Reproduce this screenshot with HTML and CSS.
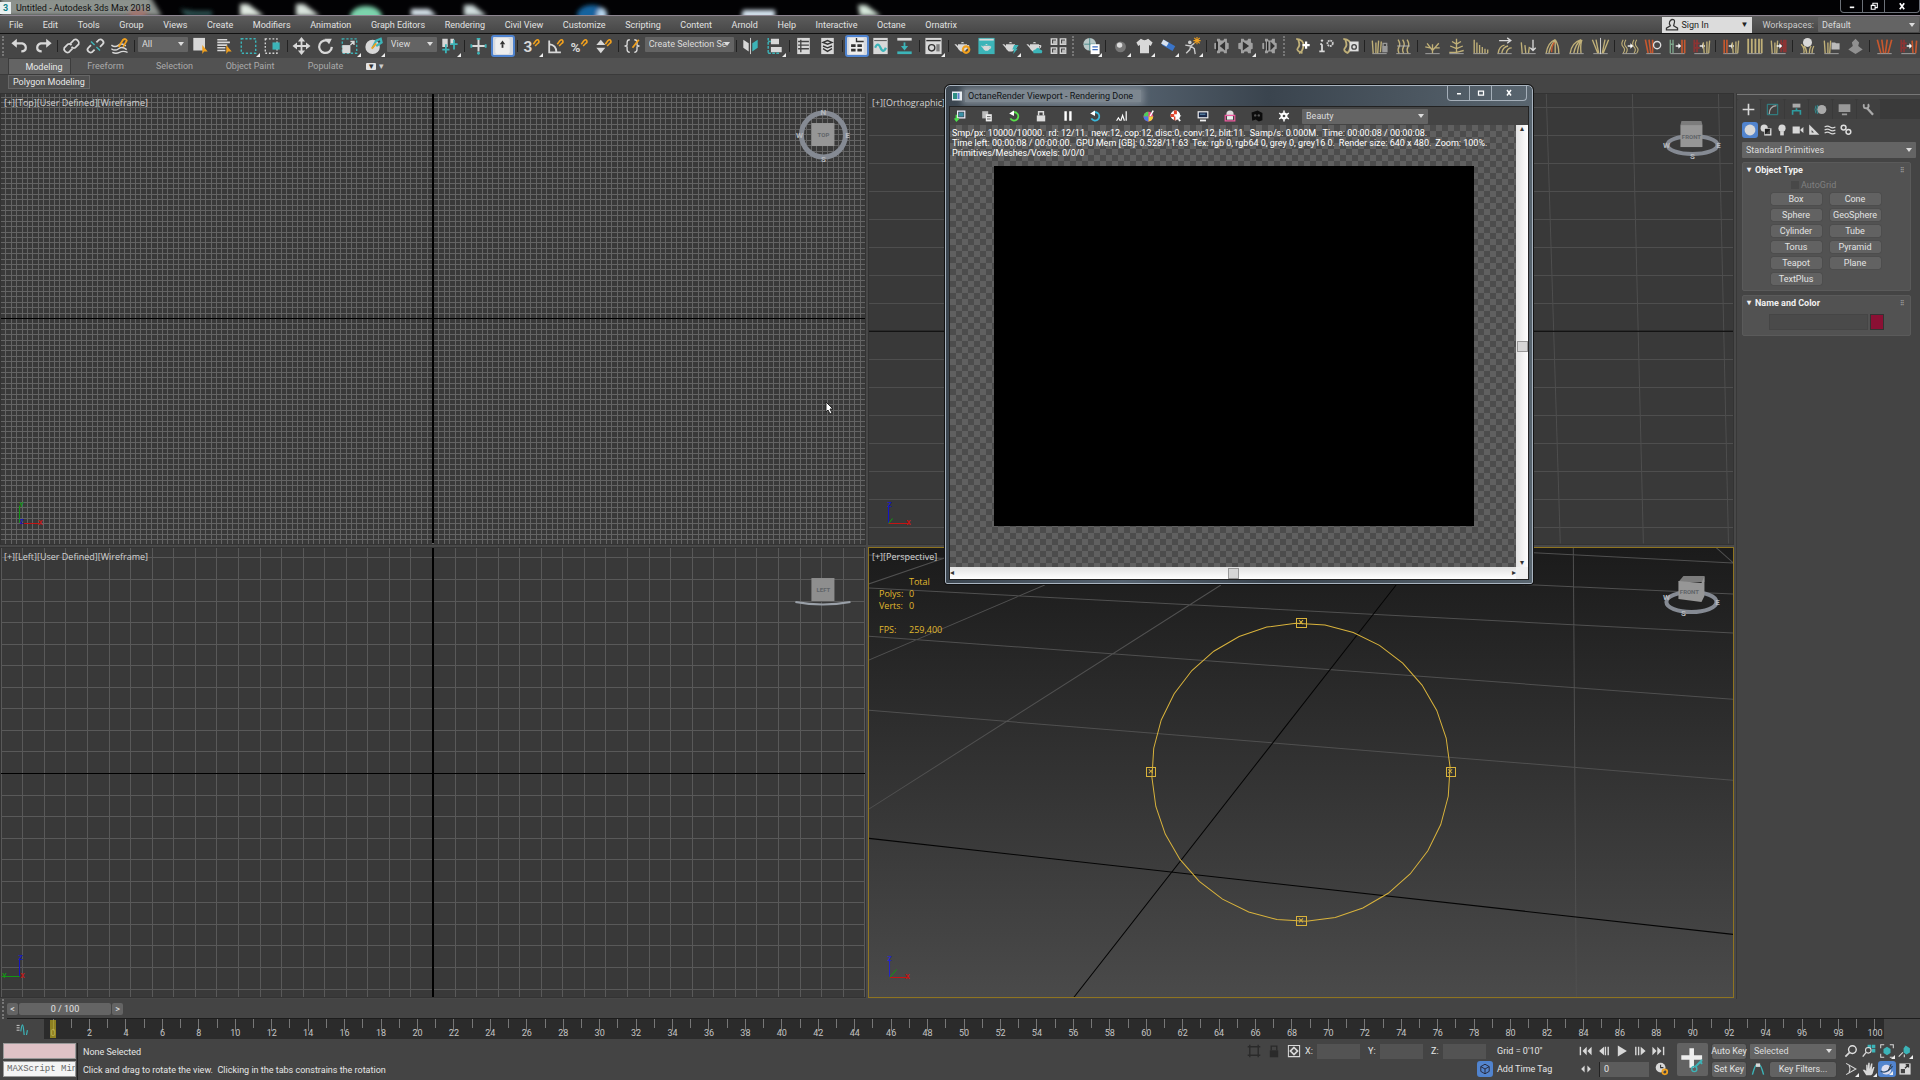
FILE: index.html
```
<!DOCTYPE html>
<html lang="en">
<head>
    <meta charset="UTF-8">
    <meta name="viewport" content="width=device-width, initial-scale=1.0">
    <title>Untitled - Autodesk 3ds Max 2018</title>
    <link rel="stylesheet" href="styles.css">
</head>
<body>

<header class="titlebar">
    <svg class="desktop" width="960" height="16" viewBox="0 0 960 16">
        <g filter="url(#soft)">
            <path d="M0 -4h150l12 20h-162z" fill="#8c928d"/>
            <ellipse cx="138" cy="14" rx="10" ry="5" fill="#a0766f"/>
            <path d="M180 9l14 2h18v5h-26z" fill="#2f5554"/>
            <path d="M240 4h8l16 12h-24z" fill="#dfe8e0"/>
            <path d="M296 4h8l16 12h-24z" fill="#d8e2dc"/>
            <ellipse cx="366" cy="17" rx="16" ry="11" fill="#7bd3ac"/>
            <path d="M411 9h18l8 7h-26z" fill="#dde9f2"/>
            <path d="M464 5h9l14 11h-23z" fill="#cfdcdc"/>
            <ellipse cx="592" cy="15" rx="15" ry="10" fill="#17639f"/>
            <ellipse cx="602" cy="15" rx="5" ry="7" fill="#b9d7ee"/>
            <path d="M743 10h32v8h-34z" fill="#d9e8f4"/>
            <path d="M858 5h8l15 11h-21z" fill="#d5e6da"/>
        </g>
        <defs><filter id="soft" x="-10%" y="-100%" width="120%" height="300%"><feGaussianBlur stdDeviation="2"/></filter></defs>
    </svg>
    <span class="app-icon">3</span>
    <span class="app-title">Untitled - Autodesk 3ds Max 2018</span>
    <div class="win-buttons">
        <button data-icon="winMin"></button><button data-icon="winRestore"></button><button class="close" data-icon="winClose"></button>
    </div>
</header>

<nav class="menubar">
    <div class="menus">
        <a href="#">File</a><a href="#">Edit</a><a href="#">Tools</a><a href="#">Group</a><a href="#">Views</a><a href="#">Create</a><a href="#">Modifiers</a><a href="#">Animation</a><a href="#">Graph Editors</a><a href="#">Rendering</a><a href="#">Civil View</a><a href="#">Customize</a><a href="#">Scripting</a><a href="#">Content</a><a href="#">Arnold</a><a href="#">Help</a><a href="#">Interactive</a><a href="#">Octane</a><a href="#">Ornatrix</a>
    </div>
    <button class="sign-in"><i data-icon="user"></i>Sign In<b>▼</b></button>
    <label for="workspace">Workspaces:</label>
    <select id="workspace" class="combo workspace"><option>Default</option></select>
</nav>

<div class="toolbar">
    <span class="grip"></span>
    <button data-icon="undo"></button>
    <button data-icon="redo"></button>
    <hr>
    <button data-icon="link"></button>
    <button data-icon="unlink"></button>
    <button data-icon="bind"></button>
    <hr>
    <select class="combo w50" aria-label="Selection filter"><option>All</option></select>
    <button data-icon="select"></button>
    <button data-icon="selectName"></button>
    <button data-icon="region" class="fly"></button>
    <button data-icon="windowSel"></button>
    <hr>
    <button data-icon="move"></button>
    <button data-icon="rotate"></button>
    <button data-icon="scale" class="fly"></button>
    <button data-icon="place" class="fly"></button>
    <select class="combo w50" aria-label="Reference coordinates"><option>View</option></select>
    <button data-icon="pivot" class="fly"></button>
    <hr>
    <button data-icon="manipulate"></button>
    <button data-icon="keyboard" class="on"></button>
    <hr>
    <button data-icon="snap3" class="fly"></button>
    <button data-icon="snapAngle"></button>
    <button data-icon="snapPercent"></button>
    <button data-icon="snapSpin"></button>
    <hr>
    <button data-icon="namedSets"></button>
    <select class="combo w89" aria-label="Named selections"><option>Create Selection Se</option></select>
    <hr>
    <button data-icon="mirror"></button>
    <button data-icon="align" class="fly"></button>
    <hr>
    <button data-icon="sceneList"></button>
    <button data-icon="layers"></button>
    <hr>
    <button data-icon="ribbon" class="on"></button>
    <button data-icon="curve"></button>
    <button data-icon="schematic"></button>
    <hr>
    <button data-icon="material" class="fly"></button>
    <hr>
    <button data-icon="teapotGear"></button>
    <button data-icon="teapotFrame"></button>
    <button data-icon="teapotBolt" class="fly"></button>
    <button data-icon="teapotCloud"></button>
    <button data-icon="gallery"></button>
    <span class="grip"></span>
    <button data-icon="globe" class="fly"></button>
    <hr>
    <button data-icon="ball" class="fly"></button>
    <button data-icon="shirt" class="fly"></button>
    <button data-icon="tube" class="fly"></button>
    <button data-icon="ragdoll" class="fly"></button>
    <hr>
    <button data-icon="gearPrev"></button>
    <button data-icon="gearPlay" class="fly"></button>
    <button data-icon="gearStep"></button>
    <span class="grip"></span>
    <button data-icon="hairAdd"></button>
    <button data-icon="hairInfo"></button>
    <button data-icon="hairPreset"></button>
    <hr>
    <button data-icon="hairLock"></button>
    <button data-icon="hairUp"></button>
    <hr>
    <button data-icon="hairBranch"></button>
    <button data-icon="hairTree"></button>
    <button data-icon="hairLength"></button>
    <button data-icon="hairWind"></button>
    <button data-icon="hairDown"></button>
    <button data-icon="hairFan"></button>
    <button data-icon="hairCurl"></button>
    <button data-icon="hairSplit"></button>
    <hr>
    <button data-icon="hairConvert"></button>
    <button data-icon="hairRing"></button>
    <button data-icon="hairToMesh"></button>
    <button data-icon="meshToHair"></button>
    <hr>
    <button data-icon="redToHair"></button>
    <button data-icon="hairBlock"></button>
    <button data-icon="hairToRed"></button>
    <hr>
    <button data-icon="hairBall"></button>
    <button data-icon="hairFolder"></button>
    <button data-icon="hairGray"></button>
    <hr>
    <button data-icon="redFan"></button>
    <button data-icon="redConvert"></button>
</div>

<div class="ribbon">
    <div class="ribbon-tabs">
        <button class="active">Modeling</button><button>Freeform</button><button>Selection</button><button>Object Paint</button><button>Populate</button>
        <button class="ribbon-min" aria-label="Minimize"><i>▾</i>▾</button>
    </div>
    <div class="ribbon-panel"><button>Polygon Modeling</button></div>
</div>

<main class="workspace-area">
    <div class="viewports">
        <section class="viewport">
            <svg viewBox="0 0 864 449" preserveAspectRatio="xMidYMid slice">
                <g id="grid-top" stroke="#646464"></g>
                <path d="M432 0v449M0 224h864" stroke="#000" shape-rendering="crispEdges"/>
                <g class="axis"><path d="M19 429v-18" stroke="#139613"/><path d="M19 429h20" stroke="#c41414"/><text x="21" y="413" fill="#139613">Y</text><text x="40" y="431" fill="#c41414">X</text><text x="21" y="430" fill="#1414c8">Z</text></g>
                <g class="cube">
                    <circle cx="822" cy="41" r="22" fill="none" stroke="#858a93" stroke-width="5"/>
                    <path d="M810 29h23v23h-23z" fill="#969696"/><text x="822" y="43" fill="#777">TOP</text>
                    <text x="822" y="21">N</text><text x="822" y="68">S</text><text x="798" y="44">W</text><text x="846" y="44">E</text>
                </g>
            </svg>
            <div class="vp-label"><span>[+]</span><span>[Top]</span><span>[User Defined]</span><span>[Wireframe]</span></div>
            <svg class="cursor" width="10" height="14" viewBox="0 0 10 14"><path d="M1 1v10l2-2 2 4 2-1-2-4h3z" fill="#fff" stroke="#222"/></svg>
        </section>
        <section class="viewport">
            <svg viewBox="0 0 864 449" preserveAspectRatio="xMidYMid slice">
                <g id="grid-ortho" stroke="#4e4e4e" shape-rendering="crispEdges"></g>
                <path d="M677 0l14 449M763 0l11 449M849 0l10 449" stroke="#4e4e4e"/>
                <path d="M0 237h864" stroke="#000"/>
                <g class="axis"><path d="M20 429v-18" stroke="#1414c8"/><path d="M20 429h22" stroke="#c41414"/><path d="M20 429l4-5" stroke="#139613"/><text x="21" y="413" fill="#1414c8">Z</text><text x="40" y="431" fill="#c41414">X</text></g>
                <g class="cube">
                    <ellipse cx="823" cy="51" rx="25" ry="9" fill="none" stroke="#858a93" stroke-width="4"/>
                    <path d="M811 31l1-4h20l1 4z" fill="#7c7c7c"/><path d="M811 31h22v22h-22z" fill="#969696"/><text x="822" y="45" fill="#666">FRONT</text>
                    <text x="797" y="54">W</text><text x="849" y="54">E</text><text x="823" y="65">S</text>
                </g>
            </svg>
            <div class="vp-label"><span>[+]</span><span>[Orthographic]</span></div>
        </section>
        <section class="viewport">
            <svg viewBox="0 1 864 449" preserveAspectRatio="xMidYMid slice">
                <g id="grid-left" stroke="#595959"></g>
                <path d="M432 0v450M0 226h864" stroke="#000" shape-rendering="crispEdges"/>
                <g class="axis"><path d="M19 429v-18" stroke="#1414c8"/><path d="M19 429h-18" stroke="#139613"/><text x="20" y="413" fill="#1414c8">Z</text><text x="4" y="431" fill="#139613">Y</text><text x="22" y="431" fill="#c41414">X</text></g>
                <g class="cube">
                    <path d="M810 31h23v23h-23z" fill="#8e8e8e"/><text x="822" y="45" fill="#555">LEFT</text>
                    <path d="M794 55q27 5 55 0" fill="none" stroke="#9aa0a8" stroke-width="2"/>
                </g>
            </svg>
            <div class="vp-label"><span>[+]</span><span>[Left]</span><span>[User Defined]</span><span>[Wireframe]</span></div>
        </section>
        <section class="viewport active">
            <svg viewBox="0 1 864 449" preserveAspectRatio="xMidYMid slice">
                <path d="M531 -1L864 16M0 8L864 47M0 41L864 86M0 89L864 152M0 163L864 233M0 37L76 11M0 113L176 38M0 262L352 38M704 0L707 450M846 0L864 16" stroke="#505050" fill="none"/>
                <path d="M0 291L864 387M205 450L527 38" stroke="#050505" fill="none"/>
                <polygon id="orbit" fill="none" stroke="#d9b33c"/>
                <g fill="none" stroke="#d9b33c" shape-rendering="crispEdges">
                    <path d="M428 71h9v9h-9zM278 220h9v9h-9zM428 369h9v9h-9zM577 220h9v9h-9z"/>
                </g>
                <path d="M430 73l4 4m0-4l-4 4M280 222l4 4m0-4l-4 4M430 371l4 4m0-4l-4 4M579 222l4 4m0-4l-4 4" stroke="#d9b33c"/>
                <g class="axis"><path d="M21 430v-18" stroke="#2424d0"/><path d="M21 430h20" stroke="#c41414"/><path d="M21 430l7-8" stroke="#139613"/><text x="21" y="414" fill="#2424d0">Z</text><text x="39" y="432" fill="#c41414">X</text></g>
                <g class="cube">
                    <ellipse cx="822" cy="55" rx="25" ry="10" fill="none" stroke="#858a93" stroke-width="4"/>
                    <path d="M809 35l5-6h21v6z" fill="#7c7c7c"/><path d="M809 34l23 2 3-7v20l-3 6-23-3z" fill="#969696"/><text x="820" y="47" fill="#666">FRONT</text>
                    <text x="797" y="53">W</text><text x="848" y="58">E</text><text x="814" y="69">S</text>
                </g>
            </svg>
            <div class="vp-label"><span>[+]</span><span>[Perspective]</span></div>
            <dl class="stats">
                <dt></dt><dd>Total</dd>
                <dt>Polys:</dt><dd>0</dd>
                <dt>Verts:</dt><dd>0</dd>
                <dt></dt><dd>&nbsp;</dd>
                <dt>FPS:</dt><dd>259,400</dd>
            </dl>
        </section>
    </div>

    <aside class="panel">
        <div class="panel-tabs">
            <button class="active" data-icon="tabCreate"></button><button data-icon="tabModify"></button><button data-icon="tabHierarchy"></button><button data-icon="tabMotion"></button><button data-icon="tabDisplay"></button><button data-icon="tabUtil"></button>
        </div>
        <div class="panel-cats">
            <button class="on" data-icon="catGeo"></button><button data-icon="catShape"></button><button data-icon="catLight"></button><button data-icon="catCamera"></button><button data-icon="catHelper"></button><button data-icon="catWarp"></button><button data-icon="catSystem"></button>
        </div>
        <select class="combo primitives" aria-label="Category"><option>Standard Primitives</option></select>
        <section class="rollout">
            <h2>Object Type</h2>
            <label class="autogrid"><input type="checkbox" disabled>AutoGrid</label>
            <div class="objects">
                <button>Box</button><button>Cone</button>
                <button>Sphere</button><button>GeoSphere</button>
                <button>Cylinder</button><button>Tube</button>
                <button>Torus</button><button>Pyramid</button>
                <button>Teapot</button><button>Plane</button>
                <button>TextPlus</button>
            </div>
        </section>
        <section class="rollout">
            <h2>Name and Color</h2>
            <div class="name-row"><input type="text" aria-label="Name"><button class="swatch" aria-label="Color"></button></div>
        </section>
    </aside>
</main>

<div class="time-slider">
    <span class="grip"></span>
    <button>&lt;</button><button class="frame">0 / 100</button><button>&gt;</button>
</div>
<div class="trackbar">
    <button class="mini-curve" data-icon="miniCurve"></button>
    <div class="track" id="track"></div>
</div>

<footer class="status">
    <div class="script">
        <input type="text" class="pink" aria-label="Macro recorder">
        <input type="text" value="MAXScript Mini Listener" aria-label="MAXScript listener">
    </div>
    <div class="prompt"><p>None Selected</p><p>Click and drag to rotate the view.&nbsp; Clicking in the tabs constrains the rotation</p></div>
    <div class="coords">
        <div class="line">
            <button class="dim" data-icon="isolate"></button><button class="dim" data-icon="lock"></button><button data-icon="absolute"></button>
            <label for="cx">X:</label><input id="cx" type="text">
            <label for="cy">Y:</label><input id="cy" type="text">
            <label for="cz">Z:</label><input id="cz" type="text">
            <span class="grid-size">Grid = 0'10"</span>
        </div>
        <div class="line tag"><button class="on" data-icon="cubeTag"></button><span class="grid-size">Add Time Tag</span></div>
    </div>
    <div class="playback">
        <div class="line"><button data-icon="first"></button><button data-icon="prev"></button><button data-icon="play"></button><button data-icon="next"></button><button data-icon="last"></button></div>
        <div class="line"><button data-icon="keyMode"></button><input type="text" value="0" aria-label="Frame"><button data-icon="timeConfig"></button></div>
    </div>
    <button class="set-keys" data-icon="bigKey"></button>
    <div class="keys">
        <div class="line"><button class="push">Auto Key</button><select class="combo w86" aria-label="Key set"><option>Selected</option></select></div>
        <div class="line"><button class="push">Set Key</button><button data-icon="tangent"></button><button class="push filters">Key Filters...</button></div>
    </div>
    <div class="nav">
        <button data-icon="zoom"></button><button data-icon="zoomAll"></button><button class="fly" data-icon="extents"></button><button class="fly" data-icon="extentsAll"></button>
        <button class="fly" data-icon="fov"></button><button class="fly" data-icon="pan"></button><button class="fly on" data-icon="orbitNav"></button><button data-icon="maximize"></button>
    </div>
</footer>

<!-- floating render window -->
<div class="octane">
    <div class="octane-title">
        <i data-icon="octaneApp"></i><span>OctaneRender Viewport - Rendering Done</span>
        <div class="win-buttons">
            <button data-icon="winMin"></button><button data-icon="winMax"></button><button class="close" data-icon="winClose"></button>
        </div>
    </div>
    <div class="octane-body">
        <div class="octane-tools">
            <button data-icon="oSave"></button><button data-icon="oCopy"></button><button data-icon="oRestart"></button><button data-icon="oLock"></button><button data-icon="oPause"></button><button data-icon="oRefresh"></button><button data-icon="oFocus"></button><button data-icon="oPick"></button><button data-icon="oTarget"></button><button data-icon="oScreen"></button><button data-icon="oRegion"></button><button data-icon="oFilm"></button><button data-icon="oGear"></button>
            <select class="combo beauty" aria-label="Render pass"><option>Beauty</option></select>
        </div>
        <div class="octane-view">
            <div class="canvas">
                <p><span>Smp/px: 10000/10000.</span><span>rd: 12/11.</span><span>new:12, cop:12, disc:0, conv:12, blit:11.</span><span>Samp/s: 0.000M.</span><span>Time: 00:00:08 / 00:00:08.</span></p>
                <p><span>Time left: 00:00:08 / 00:00:00.</span><span>GPU Mem [GB]: 0.528/11.63</span><span>Tex: rgb 0, rgb64 0, grey 0, grey16 0.</span><span>Render size: 640 x 480.</span><span>Zoom: 100%.</span></p>
                <p><span>Primitives/Meshes/Voxels: 0/0/0</span></p>
                <div class="frame-buffer"></div>
            </div>
            <div class="vscroll"><i>▴</i><b></b><i>▾</i></div>
            <div class="hscroll"><i>◂</i><b></b><i>▸</i></div>
        </div>
    </div>
</div>

<script src="script.js"></script>
</body>
</html>
```
FILE: styles.css
```
* {
    box-sizing: border-box;
}
body {
    margin: 0;
    height: 100vh;
    display: flex;
    flex-direction: column;
    overflow: hidden;
    background: #444;
    color: #e2e2e2;
    font-family: Roboto, "Liberation Sans", sans-serif;
    font-size: 9px;
    line-height: 12px;
}
p, h2, dl, dd {
    margin: 0;
}
button, input, select {
    font: inherit;
    color: inherit;
    margin: 0;
    padding: 0;
    border: 0;
    background: none;
    min-width: 0;
}
button {
    white-space: nowrap;
}
svg {
    display: block;
}
a {
    color: inherit;
    text-decoration: none;
}

/* title bar */
.titlebar {
    position: relative;
    flex: none;
    height: 16px;
    display: flex;
    align-items: center;
    background: #020204;
    border-bottom: 1px solid #8d8590;
    overflow: hidden;
}
.desktop {
    position: absolute;
    left: 0;
    top: 0;
}
.app-icon {
    position: relative;
    width: 11px;
    margin-right: 5px;
    background: #e9f0f0;
    color: #0e7f86;
    font-weight: bold;
    text-align: center;
}
.app-title {
    position: relative;
    color: #111;
}
.win-buttons {
    display: flex;
    margin-left: auto;
    align-self: flex-start;
    border: 1px solid #6c7178;
    border-top: 0;
    border-radius: 0 0 4px 4px;
}
.win-buttons button {
    width: 22px;
    height: 12px;
    display: flex;
    align-items: center;
    justify-content: center;
    border-right: 1px solid #6c7178;
}
.win-buttons .close {
    width: 34px;
    border-right: 0;
}
.win-buttons svg {
    width: 14px;
    height: 11px;
}

/* menu */
.menubar {
    flex: none;
    height: 18px;
    display: flex;
    align-items: center;
    padding: 0 1px 0 9px;
    background: linear-gradient(#5c5c5c, #474747);
    border-bottom: 1px solid #111;
}
.menus {
    display: flex;
    justify-content: space-between;
    width: 948px;
}
.menubar label {
    margin: 0 4px 0 11px;
    color: #ccc;
}
.sign-in {
    display: flex;
    align-items: center;
    width: 90px;
    height: 16px;
    margin-left: auto;
    padding-right: 3px;
    background: #dcdcdc;
    color: #222;
}
.sign-in b {
    margin-left: auto;
    font-size: 8px;
}
.sign-in svg {
    width: 20px;
    height: 16px;
}
.combo {
    appearance: none;
    height: 15px;
    padding: 0 4px;
    border-radius: 1px;
    color: #dcdcdc;
    background: #646464 url("data:image/svg+xml,%3Csvg xmlns='http://www.w3.org/2000/svg' width='6' height='4'%3E%3Cpath d='M0 0h6L3 4z' fill='%23ddd'/%3E%3C/svg%3E") no-repeat right 4px center;
}
.workspace {
    width: 101px;
}
.w50 {
    width: 50px;
    margin: 0 1px;
}
.w89 {
    width: 89px;
}
.w86 {
    width: 86px;
}

/* main toolbar */
.toolbar {
    flex: none;
    height: 24px;
    display: flex;
    align-items: center;
    background: #464646;
}
.toolbar button {
    position: relative;
    flex: 0 0 24px;
    height: 22px;
    display: flex;
    align-items: center;
    justify-content: center;
}
.toolbar button svg {
    width: 19px;
    height: 18px;
}
.toolbar hr {
    width: 1px;
    height: 12px;
    margin: 0 2px;
    border: 0;
    background: #222;
}
.toolbar .combo {
    margin-top: -4px;
    flex: none;
}
.on {
    background: #d5d9e0;
    border: 2px solid #4f83cf;
    border-radius: 3px;
}
.fly::after {
    content: "";
    position: absolute;
    right: 1px;
    bottom: 0;
    border: 2px solid transparent;
    border-right-color: #eee;
    border-bottom-color: #eee;
}
.grip {
    flex: none;
    width: 3px;
    height: 20px;
    margin: 0 4px 0 2px;
    border-left: 2px dotted #777;
}
.toolbar .grip:first-child {
    margin-right: 2px;
}

/* ribbon */
.ribbon {
    flex: none;
    padding-left: 8px;
    background: #525252;
    height: 35px;
}
.ribbon-tabs {
    display: flex;
    height: 16px;
    color: #aaa;
}
.ribbon-tabs button {
    width: 69px;
    text-align: center;
}
.ribbon-tabs button:nth-child(1) {
    width: 63px;
    padding-left: 9px;
    color: #e8e8e8;
    background: #646464;
    border: 1px solid #3c3c3c;
    border-bottom: 0;
}
.ribbon-tabs button:nth-child(4) {
    width: 82px;
}
.ribbon-tabs .ribbon-min {
    width: 30px;
    color: #ccc;
}
.ribbon-min i {
    display: inline-block;
    width: 10px;
    height: 7px;
    margin-right: 3px;
    border-radius: 1px;
    background: #e4e4e4;
    color: #333;
    font-style: normal;
    line-height: 7px;
    text-align: center;
}
.ribbon-panel {
    height: 19px;
    margin-left: -8px;
    padding-left: 8px;
    background: #454545;
    border-top: 1px solid #3a3a3a;
}
.ribbon-panel button {
    display: block;
    height: 14px;
    padding: 0 4px;
    background: #505050;
    border: 1px solid #666;
    color: #e8e8e8;
}

/* viewports */
.workspace-area {
    flex: 1;
    min-height: 0;
    display: flex;
}
.viewports {
    flex: 1;
    min-width: 0;
    display: grid;
    grid-template: 1fr 1fr / 1fr 1fr;
    gap: 4px;
    padding: 1px 3px 2px 1px;
    background: #484848;
}
.viewport {
    position: relative;
    min-width: 0;
    min-height: 0;
    overflow: hidden;
    background: #393939;
    outline: 1px solid #333;
}
.viewport.active {
    background: linear-gradient(#1b1b1b, #4a4a4a);
    outline: 1px solid #8f7420;
}
.viewport > svg:first-child {
    width: 100%;
    height: 100%;
}
.vp-label {
    position: absolute;
    left: 3px;
    top: 3px;
    display: flex;
    font-family: "Open Sans", sans-serif;
    color: #d4d4d4;
}
.axis {
    fill: none;
    font-size: 7px;
    font-weight: bold;
    text-anchor: middle;
}
.cube text {
    font-size: 8px;
    font-weight: bold;
    text-anchor: middle;
    fill: #b5b8bd;
}
.cube text[fill] {
    font-size: 6px;
    fill: #606468;
}
.cursor {
    position: absolute;
    left: 824px;
    top: 307px;
}
.stats {
    position: absolute;
    left: 10px;
    top: 28px;
    display: grid;
    grid-template-columns: 30px 40px;
    color: #e0b92e;
    font-family: "Open Sans", sans-serif;
}

/* command panel */
.panel {
    width: 184px;
    padding: 6px 4px 0 5px;
    background: #444;
    border-left: 1px solid #383838;
}
.panel-tabs {
    display: flex;
    margin: 0 -4px 0 -5px;
    background: #3a3a3a;
    box-shadow: 0 -4px 0 #444, 0 -5px 0 #777;
}
.panel-tabs button {
    width: 23px;
    height: 20px;
    margin-right: 1px;
    background: #404040;
    border-radius: 2px 2px 0 0;
    display: flex;
    align-items: center;
    justify-content: center;
}
.panel-tabs .active {
    background: #444;
}
.panel-tabs svg, .panel-cats svg {
    width: 13px;
    height: 13px;
}
.panel-cats {
    display: flex;
    height: 17px;
    margin: 3px 0 3px;
}
.panel-cats button {
    width: 16px;
    height: 16px;
    display: flex;
    align-items: center;
    justify-content: center;
}
.panel-cats svg {
    width: 12px;
    height: 12px;
}
.panel-cats .on {
    background: #5585cc;
}
.primitives {
    display: block;
    width: 100%;
    height: 16px;
}
.rollout {
    margin: 4px 5px 3px 0;
    padding-bottom: 5px;
    background: #525252;
    border: 1px solid #5a5a5a;
    border-radius: 2px;
}
.rollout h2 {
    height: 14px;
    padding: 0 6px 0 4px;
    display: flex;
    gap: 4px;
    font-size: 9px;
    line-height: 14px;
    font-weight: bold;
    color: #f0f0f0;
}
.rollout h2::before {
    content: "▾";
    font-size: 8px;
}
.rollout h2::after {
    content: "⠿";
    margin-left: auto;
    font-size: 6px;
    color: #999;
}
.autogrid {
    display: flex;
    gap: 2px;
    align-items: center;
    padding-left: 48px;
    height: 15px;
    color: #808080;
}
.autogrid input {
    appearance: none;
    width: 8px;
    height: 8px;
    background: #484848;
}
.objects {
    display: grid;
    grid-template-columns: 51px 51px;
    gap: 4px 8px;
    justify-content: center;
    margin: 1px 2px 0 0;
}
.objects button, .push {
    height: 12px;
    line-height: 12px;
    background: #626262;
    border-radius: 2px;
    box-shadow: 0 0 1px #2c2c2c;
    color: #e2e2e2;
}
.name-row {
    display: flex;
    justify-content: center;
    gap: 2px;
    padding-top: 4px;
}
.name-row input {
    width: 99px;
    height: 16px;
    background: #4a4a4a;
    border: 1px solid #454545;
}
.swatch {
    width: 14px;
    height: 16px;
    background: #8b1034;
    border: 1px solid #333;
}

/* time controls */
.time-slider {
    flex: none;
    height: 19px;
    display: flex;
    align-items: center;
    gap: 1px;
    padding-top: 1px;
}
.time-slider .grip {
    margin-right: 1px;
}
.time-slider button {
    width: 11px;
    height: 12px;
    line-height: 12px;
    background: #646464;
    border-radius: 2px;
}
.time-slider .frame {
    width: 92px;
}
.trackbar {
    flex: none;
    height: 21px;
    display: flex;
    margin-left: 7px;
    border-top: 1px solid #1d1d1d;
}
.mini-curve {
    width: 37px;
    padding-right: 7px;
    display: flex;
    align-items: center;
    justify-content: center;
}
.mini-curve svg {
    width: 12px;
    height: 12px;
}
.track {
    flex: 1;
    margin-right: 36px;
    display: flex;
    background: #2b2b2b;
    color: #c4c4c4;
}
.track span {
    position: relative;
    flex: 1 1 0;
    min-width: 0;
    display: flex;
    justify-content: center;
    align-items: flex-end;
    white-space: nowrap;
    background: linear-gradient(#777, #777) center top / 1px 9px no-repeat;
}
.track span:nth-child(odd) {
    background-size: 1px 12px;
}
.track .now::before {
    content: "";
    position: absolute;
    left: 6px;
    top: 1px;
    width: 6px;
    height: 18px;
    background: #b8a51e;
    opacity: 0.7;
}

/* status bar */
.status {
    flex: none;
    height: 41px;
    display: flex;
    padding: 4px 6px 0 3px;
    color: #e6e6e6;
}
.status button {
    position: relative;
    display: flex;
    align-items: center;
    justify-content: center;
}
.status svg {
    width: 14px;
    height: 14px;
}
.script {
    width: 75px;
    padding-right: 1px;
    border-right: 1px solid #222;
}
.script input {
    display: block;
    width: 73px;
    height: 16px;
    margin-bottom: 2px;
    border: 1px solid #999;
    background: #f4f4f4;
    color: #666;
    font: 9px "Liberation Mono", monospace;
    padding-left: 3px;
}
.script .pink {
    background: #dfc2c6;
}
.prompt {
    flex: 1;
    padding-left: 5px;
}
.prompt p {
    line-height: 18px;
}
.line {
    display: flex;
    align-items: center;
    height: 16px;
    margin-bottom: 2px;
}
.coords {
    width: 332px;
}
.coords button {
    width: 18px;
    height: 16px;
    margin-right: 2px;
}
.dim {
    opacity: 0.5;
}
.coords label {
    width: 12px;
}
.coords label ~ label {
    margin-left: 8px;
}
.coords input {
    width: 43px;
    height: 15px;
    background: #535353;
}
.grid-size {
    margin-left: 11px;
}
.coords .tag {
    margin-left: 232px;
}
.coords .tag .on {
    width: 16px;
    background: #5585cc;
}
.tag .grid-size {
    margin-left: 2px;
}
.playback {
    width: 100px;
}
.playback button {
    width: 18px;
}
.playback input {
    width: 50px;
    height: 15px;
    margin: 0 4px;
    padding-left: 4px;
    background: #5c5c5c;
    border-left: 1px solid #222;
}
.set-keys {
    width: 31px;
    height: 33px;
    margin-right: 4px;
    background: #626262;
    border-radius: 2px;
}
.status .set-keys svg {
    width: 26px;
    height: 26px;
}
.keys .line {
    gap: 4px;
}
.keys button {
    width: 16px;
}
.keys .push {
    width: 34px;
    height: 15px;
}
.keys .filters {
    width: 66px;
}
.nav {
    display: grid;
    grid-template: 16px 16px / repeat(4, 18px);
    row-gap: 2px;
    margin-left: 6px;
}
.nav .on {
    background: #5585cc;
}

/* octane window */
.octane {
    position: absolute;
    left: 945px;
    top: 85px;
    width: 588px;
    height: 499px;
    display: flex;
    flex-direction: column;
    padding: 0 3px 3px;
    border: 1px solid #a9b4c0;
    outline: 1px solid #111;
    border-radius: 5px 5px 2px 2px;
    background: linear-gradient(90deg, #3c4650, #566370 30%, #3a444e 55%, #59656f);
}
.octane-title {
    flex: none;
    height: 20px;
    display: flex;
    align-items: center;
    gap: 5px;
    padding: 0 2px;
    color: #101316;
}
.octane-title > span {
    padding: 0 8px 0 3px;
    margin-left: -3px;
    background: #7d8790;
    box-shadow: 0 0 6px 3px #7d8790;
}
.octane-title i {
    position: relative;
}
.octane-title svg {
    width: 12px;
    height: 10px;
}
.octane-title .win-buttons {
    border-color: #a5afb9;
}
.octane-title .win-buttons button {
    height: 14px;
    border-color: #a5afb9;
}
.octane-body {
    flex: 1;
    min-height: 0;
    display: flex;
    flex-direction: column;
    border: 1px solid #222;
}
.octane-tools {
    flex: none;
    height: 18px;
    display: flex;
    align-items: center;
    background: #444;
    padding-left: 1px;
}
.octane-tools button {
    width: 27px;
    display: flex;
    justify-content: center;
    padding-right: 10px;
}
.octane-tools svg {
    width: 12px;
    height: 12px;
}
.beauty {
    width: 126px;
}
.octane-view {
    flex: 1;
    min-height: 0;
    display: grid;
    grid-template: 1fr 12px / 1fr 12px;
    background: #f0f0f0;
}
.canvas {
    padding: 3px 0 0 2px;
    color: #fff;
    background: repeating-conic-gradient(#606060 0 25%, #4c4c4c 0 50%) 0 0 / 12px 12px;
}
.canvas p {
    display: flex;
    gap: 4px;
    height: 10px;
    line-height: 10px;
    white-space: nowrap;
}
.frame-buffer {
    width: 480px;
    height: 360px;
    margin: 8px auto 0;
    background: #000;
}
.vscroll, .hscroll {
    display: flex;
    justify-content: space-between;
    align-items: center;
    color: #333;
    font-size: 8px;
    line-height: 8px;
    background: linear-gradient(90deg, #e2e2e2, #fff);
}
.vscroll {
    flex-direction: column;
}
.hscroll {
    background: linear-gradient(#e2e2e2, #fff);
}
.vscroll i, .hscroll i {
    font-style: normal;
}
.vscroll b, .hscroll b {
    width: 11px;
    height: 11px;
    background: #d6d6d6;
    border: 1px solid #999;
}
```
FILE: script.js
```
var W = '#d8d8d8', C = '#3cb4b8', O = '#f0a01e', H = '#c0b078', R = '#c8582e', D = '#8c3434';

function s(d, color, w) {
    return '<path d="' + d + '" fill="none" stroke="' + (color || W) + '" stroke-width="' + (w || 1.5) + '"/>';
}
function f(d, color) {
    return '<path d="' + d + '" fill="' + (color || W) + '"/>';
}
function dot(x, y, r, color) {
    return '<circle cx="' + x + '" cy="' + y + '" r="' + r + '" fill="' + (color || W) + '"/>';
}

var base = s('M2 18.5h16', '#aaa', 1);
var magnet = s('M12 8l3-4q2-2 3 0t-1 3l-3 3', O, 1.8);
var pot = 'M5 8h10q1 6-3 8H8Q5 14 4.5 12L1 8h2l2 2zM8 7q2-3 4 0zM15 9q4-1 2 3l-3 2v-1q4-3 1-3z';
var gear = f('M5 2h3l1 2h3l1-2h3v4l2 1v6l-2 1v4h-3l-1-2H9l-1 2H5v-4l-3-1V7l3-1z', '#a0a0a0');
var tuftL = s('M3 18L2 4M6 18V6M8 18L9 4', H);
var tuftR = s('M13 18l-1-12M16 18V5M18 18l1-14', H);
var arrow = s('M8 10h5', '#fff', 1.5) + f('M11 7l3 3-3 3z', '#fff');

var icons = {
    winMin: f('M6 10h8v3H6z', '#fff'),
    winMax: s('M5 6h10v8H5z', '#fff', 2.5),
    winRestore: s('M5 8h7v7H5zM8 7V4h8v8h-3', '#fff', 2),
    winClose: s('M6 4l8 11M14 4L6 15', '#fff', 3),
    user: s('M10 3q4 0 3 4t-1 4l5 3v2H3v-2l5-3Q6 8 7 6t3-3z', '#333', 1.5),
    undo: s('M4 7h9q4 1 4 5t-5 4', W, 2.5) + f('M1 7l6-5v10z'),
    redo: s('M16 7H7q-4 1-4 5t5 4', W, 2.5) + f('M19 7l-6-5v10z'),
    link: s('M9 7l4-4q2-1 4 1t1 4l-4 4q-2 1-4-1M11 13l-4 4q-2 1-4-1t-1-4l4-4q2-1 4 1', W, 2),
    unlink: s('M11 6l3-3q2-1 4 1t0 4l-3 3M9 14l-3 3q-2 1-4-1t0-4l3-3', W, 2) + s('M5 5l4 4M11 11l4 4', C),
    bind: s('M1 9q4 3 8 0t8 1M1 13q4 3 8 0t9 1M2 17q4 2 8 0t9 0') + s('M9 11l5-8q3-2 4 1l-4 7', O, 2),
    select: f('M2 1h13v14H2z') + f('M12 9v10l2-3 4 0z', O),
    selectName: s('M2 3h11M2 6h14M2 9h11M2 12h9M2 15h9', W, 1.8) + f('M12 9v10l2-3 4 0z', O),
    region: '<path d="M2 2h16v16H2z" fill="none" stroke="' + C + '" stroke-width="1.6" stroke-dasharray="2.5 2"/>',
    windowSel: '<path d="M2 2h13v16H2z" fill="none" stroke="' + W + '" stroke-width="1.5" stroke-dasharray="2 2"/>' + f('M10 6h8v8h-8z', C),
    move: s('M10 3v14M3 10h14', W, 2) + f('M10 0l4 5H6zM10 20l4-5H6zM0 10l5-4v8zM20 10l-5-4v8z'),
    rotate: s('M14 5a7 7 0 1 0 3 6', W, 2.5) + f('M9 2l8 0-3 6z'),
    scale: '<path d="M2 2h16v16H2z" fill="none" stroke="' + C + '" stroke-width="1.5" stroke-dasharray="2.5 2"/>' + f('M2 9h9v9H2z') + s('M11 9l4-4M11 5h4v4', W),
    place: dot(9, 11, 8) + s('M9 12l4-8 5-2 1 4-6 4', C, 2.5) + s('M8 13l5-6', O, 2),
    pivot: f('M2 2h6v9H2zM11 2h4v7h-4z') + s('M6 8v10M2 14h8M15 3v11M11 8h8', C, 2),
    manipulate: s('M10 2v14M3 10h14', W, 2.2) + dot(10, 18, 1.6, C) + s('M8 2h4M2 8v4M18 8v4', C, 2),
    keyboard: '<rect x="2" y="1" width="16" height="18" rx="3" fill="#eee"/>' + s('M10 12V8', '#333', 2) + f('M7 8l3-4 3 4z', '#333'),
    snap3: '<text x="1" y="17" font-size="17" font-weight="bold" fill="#d8d8d8">3</text>' + magnet,
    snapAngle: s('M3 4v13h13M3 8q8 1 8 9', W, 2) + magnet,
    snapPercent: '<text x="0" y="17" font-size="15" font-weight="bold" fill="#d8d8d8">%</text>' + magnet,
    snapSpin: f('M7 3l5 6H2zM7 18l5-6H2z') + magnet,
    namedSets: s('M7 3Q4 3 4 6v3l-2 1 2 1v3q0 3 3 3M12 3q3 0 3 3v3l2 1-2 1v3q0 3-3 3') + s('M10 12l7-9', O, 2),
    mirror: f('M2 3l6 4v9l-6-4z') + f('M18 3l-6 4v9l6-4z', C) + s('M10 1v18', W, 1),
    align: f('M6 2h9v6H6zM6 11h12v6H6z') + '<path d="M3 1v18M3 5h3M3 18h12" fill="none" stroke="' + C + '" stroke-width="1.6" stroke-dasharray="3 1.5"/>',
    sceneList: f('M3 1h14v18H3z') + s('M4 5h12M4 9h12M4 13h12M7 3v14', '#444', 1.5),
    layers: f('M3 1h14v18H3z') + s('M5 6l5-2 5 2-5 2zM5 10l5 2 5-2M5 13l5 3 5-3', '#333', 1.5),
    ribbon: f('M2 1h16v18H2z', '#eee') + f('M4 8h5v3H4zM11 8h5v3h-5zM4 13h5v3H4zM11 13h5v3h-5z', '#333') + s('M10 1v4h8', '#333', 1.5),
    curve: f('M2 1h16v18H2z') + s('M3 4h14', '#444', 1) + s('M4 12q3-7 6 0t6 0', C, 2.5),
    schematic: f('M2 1h16v3H2z') + s('M10 6v6', C, 2) + f('M6 10h8l-4 5z', C) + f('M2 16h16v3H2z', C),
    material: f('M1 1h18v18H1z') + s('M2 4h16', '#333', 1.5) + '<circle cx="8" cy="12" r="3.5" fill="none" stroke="#333" stroke-width="1.5"/>' + s('M14 8v8M16 8v8', '#333', 1),
    teapotGear: f(pot) + '<circle cx="14" cy="14" r="3.5" fill="none" stroke="' + O + '" stroke-width="2.5"/>',
    teapotFrame: f('M1 1h18v18H1z', C) + s('M2 3h16', W, 2) + '<g transform="translate(3 4) scale(.7)">' + f(pot) + '</g>',
    teapotBolt: f(pot) + f('M14 9l5 0-3 4h2l-5 6 1-5h-2z', C),
    teapotCloud: f(pot) + f('M9 18q-2-3 2-4 3-4 5 0 4 1 2 4z', C),
    gallery: s('M2 2h6v6H2zM12 2h6v6h-6zM2 12h6v6H2zM12 12h6v6h-6z') + f('M4 4h4v4H4zM14 4h4v4h-4zM4 14h4v4H4zM14 14h4v4h-4z', '#bbb'),
    globe: dot(8, 8, 7, '#b8c8c8') + s('M2 8h12M8 1v14', '#4a8a8a', 1) + f('M9 8h10v11H9z', '#fff') + s('M11 11h6M11 14h6', '#3a6cc0', 1.5),
    ball: dot(10, 11, 6, '#777') + dot(9, 9, 3, '#ddd'),
    shirt: f('M6 2q4 3 8 0l5 4-2 4-2-1v9H5V9l-2 1-2-4z'),
    tube: s('M4 6l12 7', '#3a74c8', 6) + s('M3 5l6 3.500', '#d8e2ee', 5),
    ragdoll: s('M2 9l6 1 4-3M8 10l-1 4-4 4M8 10l4 3 1 6', '#ccc', 1.5) + dot(7, 6, 2, '#ccc') + s('M15 0v8M11 4h8M12 1l6 6M18 1l-6 6', O, 1.2),
    gearPrev: gear + s('M5 5v10', '#222', 2) + f('M14 5v10L8 10z', '#333'),
    gearPlay: gear + f('M7 5v10l7-5z', '#333'),
    gearStep: gear + s('M5 5v10M8 5v10', '#222', 1.5) + f('M11 5v10l5-5z', '#333'),
    hairAdd: s('M3 2q9 1 8 8t-5 8M5 3q3 6 0 9t5 6', H, 2) + s('M14 5v8M10 9h8', '#fff', 2.5),
    hairInfo: s('M5 8v8M2 16h6M3 8h2', W, 2) + dot(5, 4, 1.3) + '<circle cx="14" cy="7" r="3" fill="none" stroke="#ccc" stroke-width="2" stroke-dasharray="2 .8"/>',
    hairPreset: s('M2 2q9 1 8 8t-4 8M4 3q3 6 0 9t3 6', H, 2) + f('M9 5h10v11H9z', '#ddd') + '<circle cx="14" cy="11" r="2.5" fill="none" stroke="#444" stroke-width="1.500"/>',
    hairLock: base + tuftL + s('M11 17L12 5', H) + f('M13 10h6v7h-6z', '#999') + s('M14 10V7h4v3', '#999'),
    hairUp: base + s('M5 18q-2-4 0-7T4 3M10 18q-2-4 0-7T9 3M15 18q-2-4 0-7T14 3', H) + s('M3 10h14', '#bbb', 1),
    hairBranch: base + s('M10 18V8M10 15L4 7M10 15l7-8M7 12L2 11M13 12l5 0', H),
    hairTree: base + s('M10 18V2M10 8L5 5M10 8l5-3M10 13l-7-3M10 13l7-3M10 17l-8 0M10 17l8-2', H),
    hairLength: base + s('M3 18V3M6 18V6M9 18V9M12 18v-7M15 18v-5M18 18v-4', H),
    hairWind: base + s('M3 18Q4 10 10 9M7 18q1-7 7-8M12 18q1-6 6-6', H) + s('M4 4h12M13 1l4 3-4 3'),
    hairDown: base + s('M3 18L2 6M7 18L6 9M10 18l1-7', H) + s('M15 3v12M12 12l3 3 3-3'),
    hairFan: base + s('M3 18Q5 6 13 3M6 18Q8 8 13 4M13 18V4M17 18Q17 9 13 3', H) + s('M9 17q0-7 3-11', R),
    hairCurl: base + s('M3 18Q5 6 15 3M7 18Q9 8 14 4M11 18Q12 9 15 4M15 18Q14 9 16 3', H),
    hairSplit: base + s('M7 18L1 3M8 18L5 3M12 18l3-15M13 18l6-15', H) + s('M10 1v18', W, 1),
    hairConvert: base + s('M3 18q3-4 0-7t0-8M6 18q3-4 0-7t0-8M15 18q3-4 0-7t0-8M18 18q3-4 0-7t0-8', H, 1.2) + arrow,
    hairRing: base + s('M4 18L1 3M7 18L5 3M9 18V3', R, 1.8) + '<circle cx="14" cy="9" r="4" fill="none" stroke="#ddd" stroke-width="1.5"/>',
    hairToMesh: base + s('M2 3v15M5 3v15M2 8h4', '#7ea68c') + arrow + s('M15 3v15M18 3v15', R, 1.8),
    meshToHair: base + s('M2 3v14M5 3v14M1 7h7M1 12h7', D, 2) + arrow + tuftR,
    redToHair: base + s('M3 3v15M6 3v15', R, 1.8) + arrow + tuftR,
    hairBlock: base + s('M3 18V2M7 18V2M11 18V2M15 18V2M18 18V2', H, 2),
    hairToRed: base + tuftL + s('M13 3v14M16 3v14M18 3v14M12 7h7M12 12h7', D, 2) + arrow,
    hairBall: base + s('M6 18Q7 12 3 8M9 18q0-5-3-8M12 18q0-5 2-8M15 18q0-5 2-8', H) + dot(10, 6, 5),
    hairFolder: base + tuftL + f('M10 6h4l1 1h4v7h-9z', '#bbb'),
    hairGray: f('M10 2l4 4-1 4 5 4-8 5-8-5 5-4-1-4z', '#909090'),
    redFan: base + s('M6 18L2 3M9 18L7 3M11 18l2-15M14 18l4-15', R, 1.8),
    redConvert: base + s('M2 3v14M5 3v14M1 7h7M1 12h7', D, 2) + arrow + s('M15 18l-1-14M18 18l1-14', R, 1.8),

    tabCreate: s('M10 1v18M1 10h18', W, 2.5),
    tabModify: s('M2 2h16v16H2z', '#2e8c90', 1.5) + s('M5 17Q5 5 16 4', '#aaa', 2),
    tabHierarchy: f('M4 1h12v6H4z', '#aaa') + s('M10 8v4M4 18v-6h12v6', '#2e9ca0', 2.5),
    tabMotion: dot(12, 10, 7, '#aaa') + s('M3 4q-3 6 0 12M6 3q-4 7 0 14', '#2e8c90'),
    tabDisplay: f('M1 2h18v12H1zM6 16h8v3H6z', '#999'),
    tabUtil: s('M8 8l9 10', '#aaa', 3.5) + s('M3 2q-2 7 5 6 4-3 1-6', '#aaa', 3),
    catGeo: dot(10, 10, 9),
    catShape: dot(7, 7, 6) + s('M8 8h10v10H8z', '#eee', 2) + f('M8 8v10L18 8z', '#222'),
    catLight: dot(10, 7, 6) + f('M7 12h6v7H7z'),
    catCamera: f('M1 4h12v12H1zM14 9l5-4v10l-5-4z'),
    catHelper: f('M2 1l17 17H2z') + f('M6 10v4h4z', '#444'),
    catWarp: s('M1 5q5-3 9 0t9 0M1 10q5-3 9 0t9 0M1 15q5-3 9 0t9 0', W, 1.8),
    catSystem: '<circle cx="6" cy="6" r="4" fill="none" stroke="#ddd" stroke-width="2.5"/><circle cx="14" cy="13" r="4" fill="none" stroke="#ddd" stroke-width="2.5"/>',

    miniCurve: s('M1 4h5M1 8h5M1 12h5') + s('M8 14q3-22 5 0t6-2', C, 2),
    isolate: s('M4 1v18M16 1v18M1 4h18M1 16h18', '#111', 2),
    lock: f('M4 9h12v10H4z', '#111') + s('M6 9V3h8v6', '#111', 2),
    absolute: s('M2 2h16v16H2z') + s('M10 5l5 5-5 5-5-5z', W, 2.5),
    cubeTag: s('M10 2l7 4v8l-7 4-7-4V6zM3 6l7 4 7-4M10 10v8', '#223', 1.5),
    first: s('M2 4v12', W, 2) + f('M11 4v12l-6-6zM18 4v12l-6-6z'),
    prev: f('M10 4v12L3 10z') + s('M12 4v12M16 4v12', W, 2),
    play: f('M4 2v16l13-8z'),
    next: s('M4 4v12M8 4v12', W, 2) + f('M11 4v12l7-6z'),
    last: f('M2 4v12l6-6zM9 4v12l6-6z') + s('M18 4v12', W, 2),
    keyMode: f('M8 5v10l-5-5zM12 5v10l5-5z'),
    timeConfig: dot(8, 8, 7) + s('M8 4v4h4', '#333') + '<circle cx="14" cy="14" r="3.5" fill="none" stroke="' + O + '" stroke-width="2.5"/>',
    bigKey: s('M9 1v15M1 8h16', '#eee', 3.5) + '<circle cx="11" cy="17" r="2" fill="none" stroke="' + C + '"/>' + s('M12 15l5-5M15 11l2 2', C),
    tangent: s('M2 18Q6 4 8 4M18 18Q14 4 12 4', C, 2) + f('M7 2h6v5H7z'),
    zoom: '<circle cx="12" cy="8" r="5.500" fill="none" stroke="#e2e2e2" stroke-width="2"/>' + s('M8 12l-6 6', W, 2.5),
    zoomAll: f('M8 1h5v5H8zM14 1h5v5h-5zM14 7h5v5h-5z', C) + '<circle cx="9" cy="9" r="4" fill="none" stroke="#ddd" stroke-width="1.5"/>' + s('M6 12l-5 6', W, 2),
    extents: s('M1 6V1h5M14 1h5v5M1 14v5h5M14 19h5', W) + f('M10 4l5 3v6l-5 3-5-3V7z', C),
    extentsAll: f('M11 2l6 4v6l-5 3-4-3V6z', C) + s('M1 18l6-6M9 19v-4', W),
    fov: s('M3 2l14 8L3 18M7 5q3 5 0 10', W),
    pan: f('M6 19l-5-8 3 0 2 2V4h2v6l1-9h2v9l2-8h2l-1 9 2-4h2l-3 10-2 2z'),
    orbitNav: dot(9, 11, 7, '#dde') + s('M1 13q8 5 17-7', '#25486e', 2) + s('M12 12l4-9', '#333'),
    maximize: f('M2 2h16v16H2z') + f('M4 10h6v6H4z', '#444') + s('M10 9l5-5M11 4h4v4', '#333', 2),

    octaneApp: f('M0 1h20v18H0z', '#e8eef2') + f('M2 4h8v12H2z', '#2f8f83') + f('M11 4h4v12h-4z', '#5c83c8'),
    oSave: s('M6 2h12v11H6z', '#eef', 2) + f('M8 4h8v7H8z', '#3a8fa8') + s('M4 8v9M1 14l3 4 4-4', '#4be04b', 2.5),
    oCopy: f('M2 2h10v12H2z', '#bbb') + f('M8 7h10v12H8z', '#eee') + s('M10 11h6M10 15h6', '#555'),
    oRestart: s('M6 5a7 7 0 1 1-2 9', '#5ae04a', 3) + f('M2 6l8-5v9z', '#fff'),
    oLock: f('M3 9h14v10H3z', '#ddd') + s('M6 9V3h8v6', '#ddd', 2.5),
    oPause: s('M6 2v16M14 2v16', '#fff', 4),
    oRefresh: s('M6 5a7 7 0 1 1-2 9', '#3ab6d8', 3) + f('M2 6l8-5v9z', '#fff'),
    oFocus: s('M1 18l3-5 3 5M8 18l3-9 3 9M17 2v16', '#fff', 2),
    oPick: dot(9, 11, 8, '#e84a8a') + f('M9 11V3a8 8 0 0 0-8 8z', '#4ad05a') + f('M9 11v8a8 8 0 0 0 8-8z', '#f0d23a') + f('M9 11H1a8 8 0 0 0 8 8z', '#4a7ae8') + s('M17 1l-5 9', '#fff', 2.5),
    oTarget: dot(9, 9, 8, '#fff') + s('M9 1v6M1 9h6M9 17v-6', '#e0452c', 5) + f('M9 9h10l-4 4 3 5-3 1-2-5-4 4z', '#fff'),
    oScreen: f('M1 2h18v12H1z', '#eee') + f('M3 4h14v8H3z', '#1a2a4a') + s('M5 7h9', '#7ac') + f('M5 16h10v3H5z', '#eee'),
    oRegion: dot(10, 7, 6, '#ddd') + s('M2 9h16v9H2z', '#f05aa0', 2) + f('M5 11h10v5H5z', '#eee'),
    oFilm: f('M1 4l10-3 8 4v12l-6 2-5-3-6 2z', '#0c0c0c') + dot(7, 9, 2, '#555') + dot(13, 9, 2, '#555'),
    oGear: '<circle cx="10" cy="10" r="4" fill="none" stroke="#fff" stroke-width="3.5"/>' + s('M10 1v4M10 15v4M2 5l4 3M14 12l4 3M18 5l-4 3M6 12l-4 3', '#fff', 2.5)
};

document.querySelectorAll('[data-icon]').forEach(function (el) {
    var name = el.dataset.icon;
    el.innerHTML = '<svg viewBox="0 0 20 20">' + icons[name] + '</svg>';
    if (el.tagName === 'BUTTON') el.setAttribute('aria-label', name);
});

// square grid around the origin of a viewport
function grid(id, cx, cy, step) {
    var d = '';
    for (var i = -90; i < 90; i++) {
        var x = Math.round(cx + i * step), y = Math.round(cy + i * step);
        if (x >= 0 && x < 864) d += 'M' + x + ' 0v450';
        if (y >= 0 && y < 450) d += 'M0 ' + y + 'h864';
    }
    document.getElementById(id).innerHTML = '<path d="' + d + '" shape-rendering="crispEdges"/>';
}
grid('grid-top', 432, 224, 5.4);
grid('grid-left', 432, 226, 21.56);

var rows = '';
for (var y = 13; y < 449; y += 28) rows += 'M0 ' + y + 'h864';
document.getElementById('grid-ortho').innerHTML = '<path d="' + rows + '"/>';

// orbit gizmo
var pts = [];
for (var i = 0; i < 32; i++) {
    var a = (i * 11.25 - 2) * Math.PI / 180;
    pts.push((432 + 149 * Math.sin(a)).toFixed(1) + ',' + (225 - 149 * Math.cos(a)).toFixed(1));
}
document.getElementById('orbit').setAttribute('points', pts.join(' '));

var track = '';
for (var n = 0; n <= 100; n++) {
    track += '<span' + (n ? '' : ' class="now"') + '>' + (n % 2 ? '' : n) + '</span>';
}
document.getElementById('track').innerHTML = track;
```
